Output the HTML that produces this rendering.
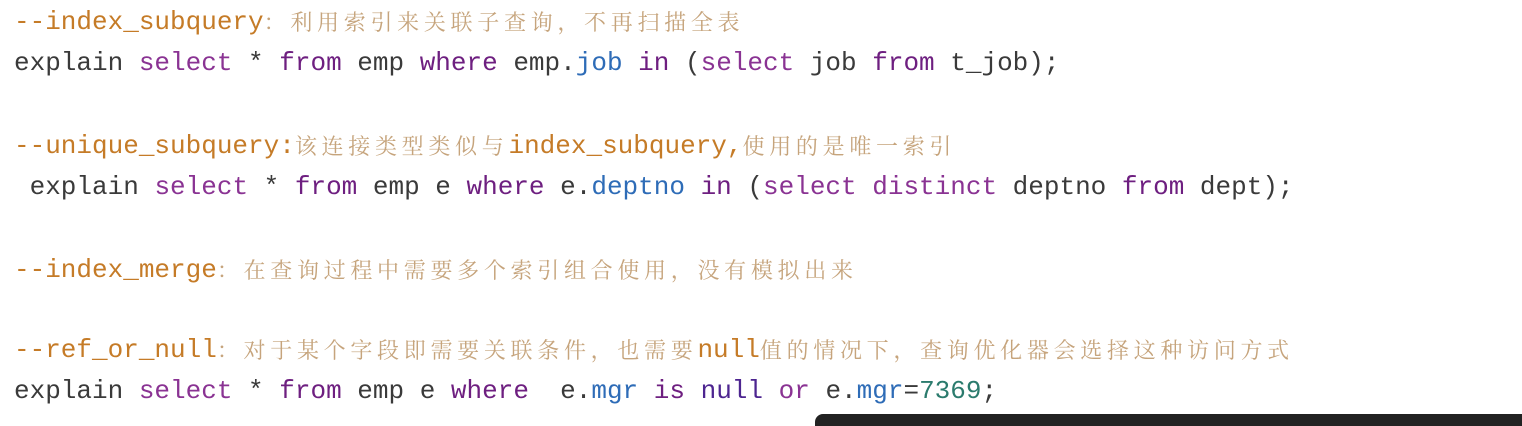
<!DOCTYPE html>
<html><head><meta charset="utf-8"><style>
body{margin:0;width:1522px;height:422px;background:#fff;overflow:hidden;position:relative}
.l{margin:0;position:absolute;left:14px;font-family:"Liberation Mono",monospace;font-size:26px;line-height:40px;height:40px;color:#3a3a3a;white-space:pre}
.c{color:#c57b27}.z{font-family:"Noto Serif CJK SC","Liberation Serif",serif;font-size:22px;letter-spacing:4.7px;color:#c6a47c;vertical-align:top}
.k{color:#8a3393}.f{color:#6e1f80}.b{color:#2e6cb7}.n{color:#2b7b6d}.u{color:#4d2590}
.bar{position:absolute;left:815px;top:414px;width:720px;height:12px;background:#222;border-radius:8px 0 0 0}
</style></head><body>
<div class="l" style="top:2px"><span class="c">--index_subquery</span><span class="z">：利用索引来关联子查询，不再扫描全表</span></div>
<div class="l" style="top:43px">explain <span class="k">select</span> * <span class="f">from</span> emp <span class="f">where</span> emp.<span class="b">job</span> <span class="f">in</span> (<span class="k">select</span> job <span class="f">from</span> t_job);</div>
<div class="l" style="top:126px"><span class="c">--unique_subquery:</span><span class="z">该连接类型类似与</span><span class="c">index_subquery,</span><span class="z">使用的是唯一索引</span></div>
<div class="l" style="top:167px"> explain <span class="k">select</span> * <span class="f">from</span> emp e <span class="f">where</span> e.<span class="b">deptno</span> <span class="f">in</span> (<span class="k">select distinct</span> deptno <span class="f">from</span> dept);</div>
<div class="l" style="top:250px"><span class="c">--index_merge</span><span class="z">：在查询过程中需要多个索引组合使用，没有模拟出来</span></div>
<div class="l" style="top:330px"><span class="c">--ref_or_null</span><span class="z">：对于某个字段即需要关联条件，也需要</span><span class="c">null</span><span class="z">值的情况下，查询优化器会选择这种访问方式</span></div>
<div class="l" style="top:371px">explain <span class="k">select</span> * <span class="f">from</span> emp e <span class="f">where</span>  e.<span class="b">mgr</span> <span class="f">is</span> <span class="u">null</span> <span class="k">or</span> e.<span class="b">mgr</span>=<span class="n">7369</span>;</div>
<div class="bar"></div>
</body></html>
